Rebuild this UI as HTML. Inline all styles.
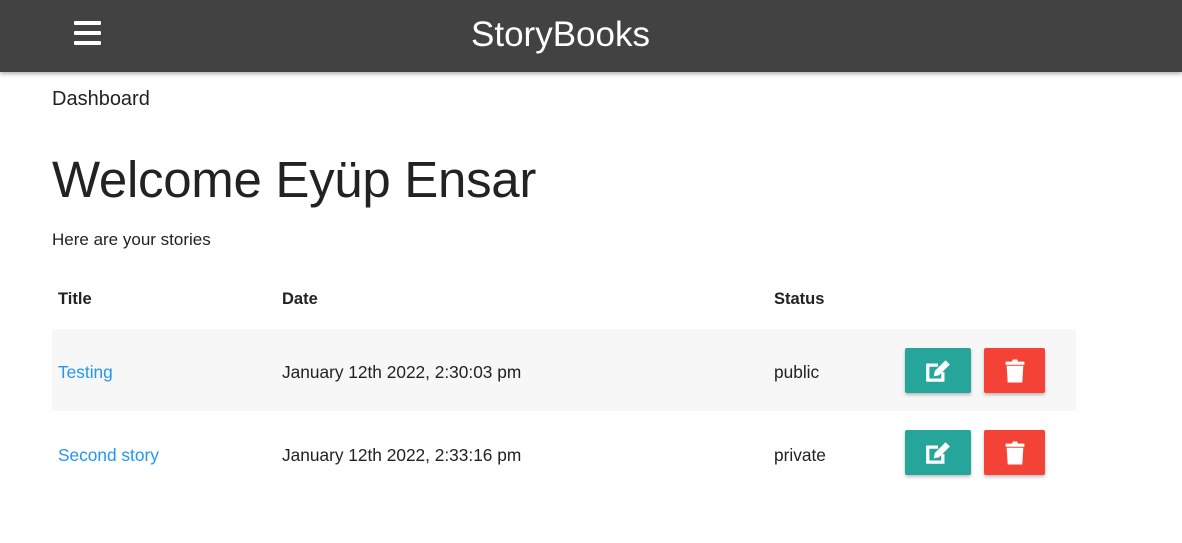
<!DOCTYPE html>
<html><head><meta charset="utf-8"><style>
*{margin:0;padding:0;box-sizing:border-box}
body{width:1182px;height:543px;background:#fff;font-family:"Liberation Sans",sans-serif;color:#222;position:relative;overflow:hidden}
.hdr{position:absolute;left:0;top:0;width:1182px;height:72px;background:#424242;box-shadow:0 2px 4px rgba(0,0,0,.3)}
.bar{position:absolute;left:74px;width:27px;height:4px;background:#fff;border-radius:1px}
.t{position:absolute;white-space:nowrap}
.row{position:absolute;left:52px;width:1024px;height:82px}
.btn{position:absolute;width:66px;height:45px;border-radius:2px;box-shadow:0 2px 3px rgba(0,0,0,.25)}
.e{background:#26a69a;left:905px}.d{background:#f44336;left:984px;width:61px}
.btn svg{position:absolute;left:50%;top:50%;transform:translate(-50%,-50%)}
</style></head><body>
<div class="hdr">
<div class="bar" style="top:21px"></div><div class="bar" style="top:31px"></div><div class="bar" style="top:41px"></div>
<div class="t" style="left:471px;top:15px;font-size:35px;color:#fff">StoryBooks</div>
</div>
<div class="t" style="left:52px;top:88px;font-size:20px">Dashboard</div>
<div class="t" style="left:52px;top:150px;font-size:51px;letter-spacing:-0.3px">Welcome Eyüp Ensar</div>
<div class="t" style="left:52px;top:230px;font-size:17px">Here are your stories</div>
<div class="t" style="left:58px;top:290px;font-size:16.5px;font-weight:bold">Title</div>
<div class="t" style="left:282px;top:290px;font-size:16.5px;font-weight:bold">Date</div>
<div class="t" style="left:774px;top:290px;font-size:16.5px;font-weight:bold">Status</div>
<div class="row" style="top:329px;background:#f7f7f7"></div>
<div class="t" style="left:58px;top:362px;font-size:17.3px;color:#2196f3">Testing</div>
<div class="t" style="left:282px;top:362px;font-size:17.3px">January 12th 2022, 2:30:03 pm</div>
<div class="t" style="left:774px;top:362px;font-size:17.3px">public</div>
<div class="t" style="left:58px;top:445px;font-size:17.3px;color:#2196f3">Second story</div>
<div class="t" style="left:282px;top:445px;font-size:17.3px">January 12th 2022, 2:33:16 pm</div>
<div class="t" style="left:774px;top:445px;font-size:17.3px">private</div>
<div class="btn e" style="top:348px"><svg width="28" height="26" viewBox="0 0 26 24"><path d="M2 5h11v3H5v11h11v-6h3v9H2z" fill="#fff"/><path d="M9 17l1-5L20 2l4 4-10 10z" fill="#fff"/></svg></div>
<div class="btn d" style="top:348px"><svg width="21" height="25" viewBox="0 0 20 24"><path d="M1 3h6l1-2h4l1 2h6v3H1z M2 7h16l-1 16H3z" fill="#fff"/></svg></div>
<div class="btn e" style="top:430px"><svg width="28" height="26" viewBox="0 0 26 24"><path d="M2 5h11v3H5v11h11v-6h3v9H2z" fill="#fff"/><path d="M9 17l1-5L20 2l4 4-10 10z" fill="#fff"/></svg></div>
<div class="btn d" style="top:430px"><svg width="21" height="25" viewBox="0 0 20 24"><path d="M1 3h6l1-2h4l1 2h6v3H1z M2 7h16l-1 16H3z" fill="#fff"/></svg></div>
</body></html>
